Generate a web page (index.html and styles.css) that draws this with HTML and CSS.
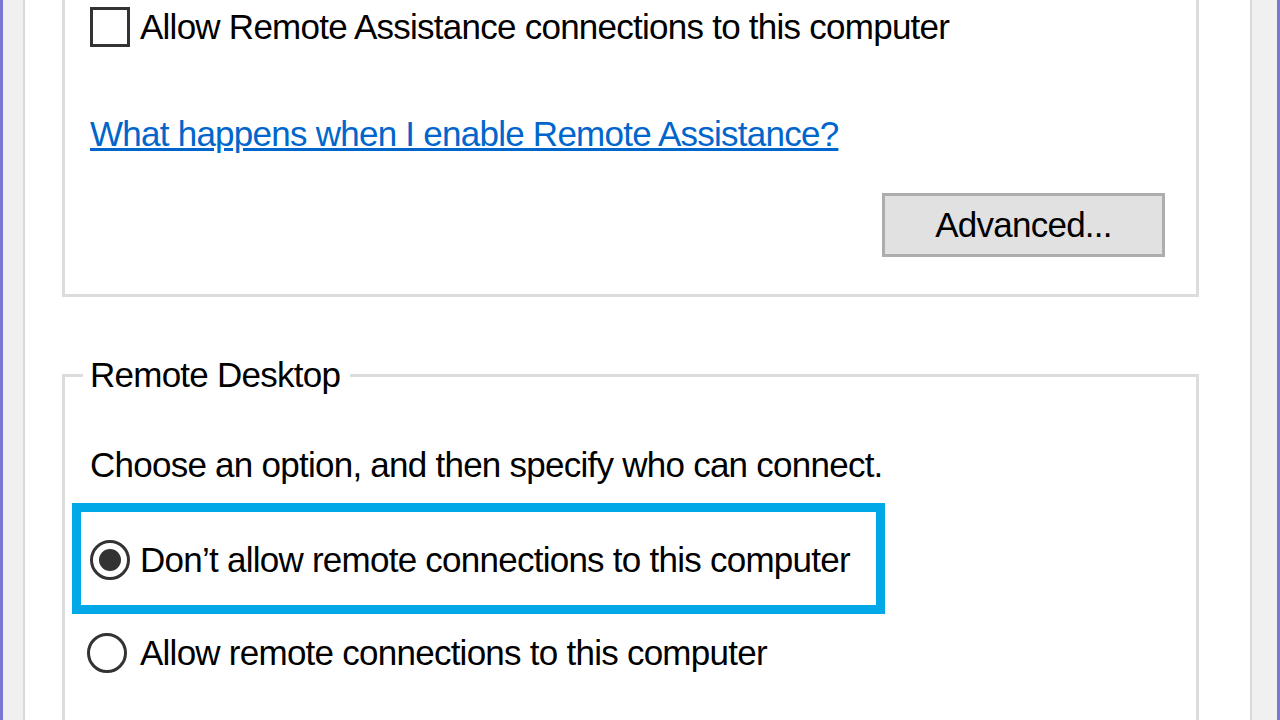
FILE: index.html
```html
<!DOCTYPE html>
<html lang="en">
<head>
<meta charset="utf-8">
<title>System Properties - Remote</title>
<link rel="stylesheet" href="styles.css">
</head>
<body>
<div class="frame">
  <div class="page">
    <section class="group group--cut">
      <label class="check-row">
        <span class="checkbox"></span>
        <span class="text">Allow Remote Assistance connections to this computer</span>
      </label>
      <a class="link" href="#">What happens when I enable Remote Assistance?</a>
      <div class="actions"><button class="btn" type="button">Advanced...</button></div>
    </section>
    <fieldset class="group group--rd">
      <legend class="legend">Remote Desktop</legend>
      <p class="hint">Choose an option, and then specify who can connect.</p>
      <div class="highlight">
        <div class="radio-row"><span class="radio radio--on"></span><span class="text">Don’t allow remote connections to this computer</span></div>
      </div>
      <div class="radio-row radio-row--shift"><span class="radio"></span><span class="text">Allow remote connections to this computer</span></div>
    </fieldset>
  </div>
</div>
</body>
</html>
```

FILE: styles.css
```css
html, body {
  margin: 0;
  height: 720px;
  overflow: hidden;
}
body {
  font-family: "Liberation Sans", Arial, sans-serif;
  font-size: 35px;
  letter-spacing: -0.75px;
  line-height: 40px;
  color: #000;
  background: #fff;
}
.frame {
  height: 720px;
  box-sizing: border-box;
  border-left: 3px solid #7b78d4;
  border-right: 3px solid #7b78d4;
  background: #f0f0f0;
  padding: 0 25px 0 20px;
}
.page {
  height: 100%;
  box-sizing: border-box;
  background: #fff;
  border-left: 2px solid #d9d9d9;
  border-right: 2px solid #d9d9d9;
  padding: 0 51px 0 37px;
  overflow: hidden;
}
.group {
  border: 3px solid #dcdcdc;
  margin: 0;
  padding: 0 0 0 25px;
  min-width: 0;
}
.group--cut {
  border-top: 0;
  padding-top: 7px;
  padding-bottom: 37px;
}
.check-row {
  display: flex;
  align-items: center;
  gap: 10px;
  height: 40px;
}
.checkbox {
  width: 40px;
  height: 40px;
  box-sizing: border-box;
  border: 3px solid #333;
  background: #fff;
  flex: none;
}
.link {
  display: block;
  width: fit-content;
  margin-top: 67px;
  color: #0066cc;
  text-decoration: underline;
}
.actions {
  display: flex;
  justify-content: flex-end;
  margin-top: 39px;
  padding-right: 31px;
}
.btn {
  width: 283px;
  height: 64px;
  box-sizing: border-box;
  border: 3px solid #adadad;
  background: #e1e1e1;
  font: inherit;
  letter-spacing: inherit;
  color: #000;
  padding: 0;
}
.group--rd {
  margin-top: 58px;
  padding-bottom: 80px;
}
.legend {
  padding: 0 10px 0 7px;
  margin-left: -7px;
  line-height: 40px;
}
.hint {
  margin: 50px 0 0;
}
.highlight {
  width: 813px;
  box-sizing: border-box;
  margin: 18px 0 0 -18px;
  border: 9px solid #00a8e8;
  padding: 28px 0 25px 9px;
}
.radio-row {
  display: flex;
  align-items: center;
  gap: 10px;
  height: 40px;
}
.radio-row--shift {
  margin: 19px 0 0 -3px;
  gap: 13px;
}
.radio {
  width: 40px;
  height: 40px;
  flex: none;
  box-sizing: border-box;
  border: 3px solid #333;
  border-radius: 50%;
  display: grid;
  place-items: center;
}
.radio--on::after {
  content: "";
  width: 22px;
  height: 22px;
  border-radius: 50%;
  background: #333;
}
```
